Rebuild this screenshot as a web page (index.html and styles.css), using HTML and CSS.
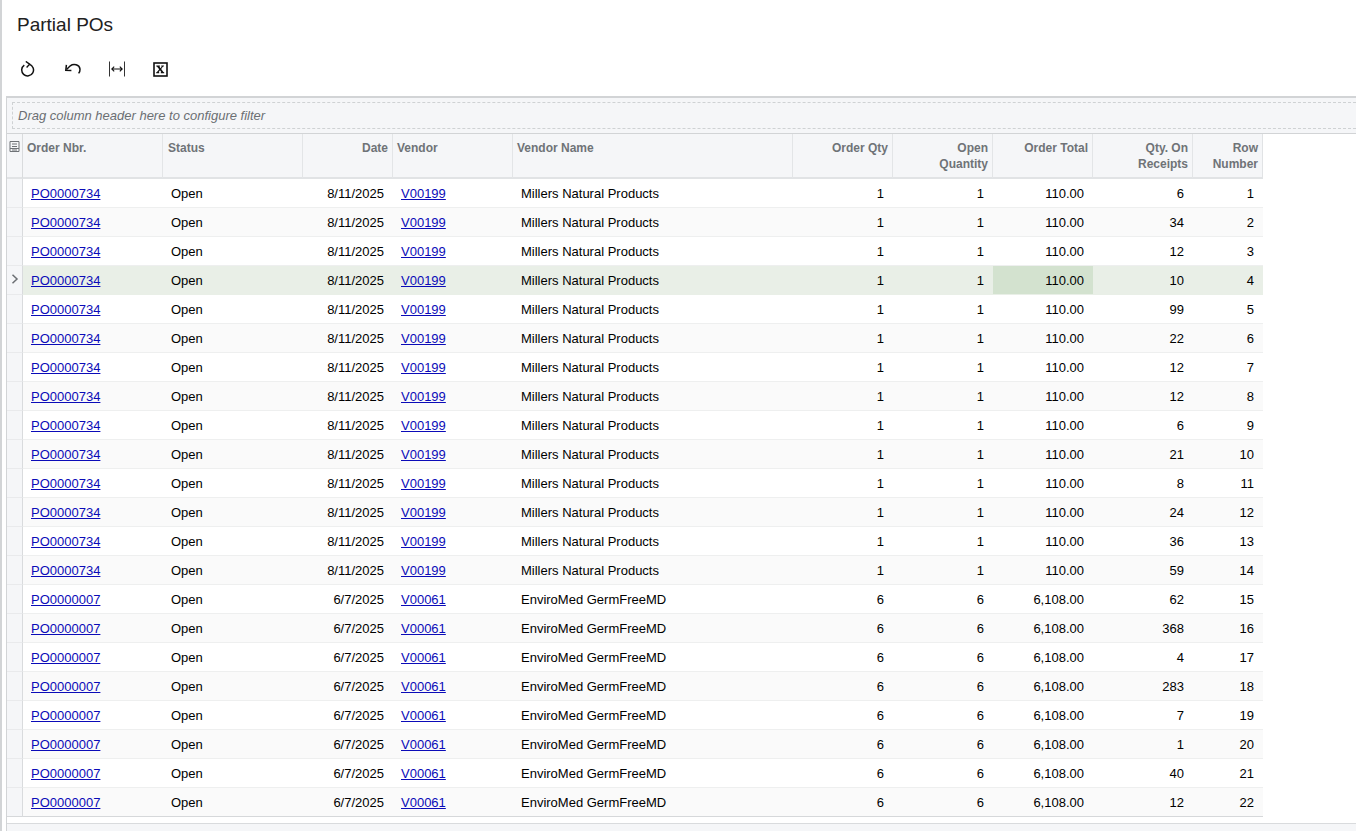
FILE: index.html
```html
<!DOCTYPE html>
<html lang="en">
<head>
<meta charset="utf-8">
<title>Partial POs</title>
<link rel="stylesheet" href="styles.css">
</head>
<body>
<div class="page">
  <h1 class="title">Partial POs</h1>
  <div class="toolbar">
    <button class="tool" aria-label="Refresh"><svg width="16" height="16" viewBox="0 0 16 16" fill="none" stroke="#111" stroke-width="1.5"><path d="M4.300 4.100A5.900 5.900 0 1 0 9.200 3.300"/><path d="M5.800 .4 9.600 3.200 6.600 6.400" stroke-width="1.400"/></svg></button>
    <button class="tool" aria-label="Undo"><svg width="17" height="16" viewBox="0 0 17 16" fill="none" stroke="#111" stroke-width="1.500"><path d="M2.500 8.500 6.300 4.800C9.500 2.400 15.500 3.400 16 8.200c.1 1.800-.5 3.100-1.400 4.200"/><path d="M2.400 3.900 1.800 9.300 7.400 9.500"/></svg></button>
    <button class="tool" aria-label="Fit columns"><svg width="18" height="16" viewBox="0 0 18 16" fill="none" stroke="#111"><path d="M1.500 .5v15M16.500 .5v15" stroke="#333"/><path d="M4 8h10M6.200 5.600 3.800 8l2.400 2.400M11.800 5.600 14.200 8l-2.400 2.400" stroke-width="1.100"/></svg></button>
    <button class="tool" aria-label="Export to Excel"><svg width="15" height="15" viewBox="0 0 15 15"><rect x="1" y="1" width="13" height="13" fill="#fff" stroke="#111" stroke-width="1.600"/><path d="M3.300 3.400h3.600v1l-.5.200 1.200 1.700 1.200-1.700-.5-.2v-1h2.600v1l-.8.200-1.900 2.500 2.200 2.900.8.200v1.100H7.800v-1.100l.5-.2-1.300-1.800-1.300 1.800.5.200v1.100H3.200v-1.100l.8-.2 2.200-2.800L4.100 4.700l-.8-.3z" fill="#111"/></svg></button>
  </div>
  <section class="grid">
    <div class="filter-bar"><div class="filter-drop">Drag column header here to configure filter</div></div>
    <table class="data">
      <colgroup>
        <col class="c-ind"><col class="c-order"><col class="c-status"><col class="c-date"><col class="c-vendor"><col class="c-name"><col class="c-num"><col class="c-num"><col class="c-num"><col class="c-num"><col class="c-row">
      </colgroup>
      <thead>
        <tr>
          <th class="ind"><svg class="cols-icon" width="11" height="13" viewBox="0 0 11 13" fill="none" stroke="#6f7377"><path d="M1 1.500h9v10H1z"/><path d="M3 4h5M3 6.500h5M1 8.500h9" /><path d="M3 10h5"/></svg></th>
          <th>Order Nbr.</th>
          <th class="status-head">Status</th>
          <th class="right">Date</th>
          <th>Vendor</th>
          <th>Vendor Name</th>
          <th class="right">Order Qty</th>
          <th class="right">Open<br>Quantity</th>
          <th class="right">Order Total</th>
          <th class="right">Qty. On<br>Receipts</th>
          <th class="right">Row<br>Number</th>
        </tr>
      </thead>
      <tbody id="rows"></tbody>
    </table>
    <div class="spacer"></div>
    <div class="footer"></div>
  </section>
</div>
<script src="app.js"></script>
</body>
</html>
```

FILE: app.js
```js
var qty = [6, 34, 12, 10, 99, 22, 12, 12, 6, 21, 8, 24, 36, 59, 62, 368, 4, 283, 7, 1, 40, 12];
var html = '';
qty.forEach(function (q, i) {
  var first = i < 14;
  var order = first ? 'PO0000734' : 'PO0000007';
  var date = first ? '8/11/2025' : '6/7/2025';
  var vendor = first ? 'V00199' : 'V00061';
  var name = first ? 'Millers Natural Products' : 'EnviroMed GermFreeMD';
  var n = first ? '1' : '6';
  var total = first ? '110.00' : '6,108.00';
  var sel = i === 3;
  html += '<tr class="' + (sel ? 'selected' : '') + '">' +
    '<td class="ind">' + (sel ? '<svg width="8" height="10" viewBox="0 0 8 10" fill="none" stroke="#6b6f73" stroke-width="1.500"><path d="M1.500 .8 6 5 1.500 9.200"/></svg>' : '') + '</td>' +
    '<td class="link-cell"><a href="#">' + order + '</a></td>' +
    '<td class="text">Open</td>' +
    '<td class="right">' + date + '</td>' +
    '<td class="link-cell"><a href="#">' + vendor + '</a></td>' +
    '<td class="text">' + name + '</td>' +
    '<td class="right">' + n + '</td>' +
    '<td class="right">' + n + '</td>' +
    '<td class="right' + (sel ? ' active' : '') + '">' + total + '</td>' +
    '<td class="right">' + q + '</td>' +
    '<td class="right">' + (i + 1) + '</td>' +
    '</tr>';
});
document.getElementById('rows').innerHTML = html;
```

FILE: styles.css
```css
* { box-sizing: border-box; }
html, body { margin: 0; height: 100%; }
body {
  overflow: hidden;
  background: #fff;
  color: #000;
  font-family: "Liberation Sans", Arial, sans-serif;
  font-size: 13px;
}
.page {
  height: 831px;
  border-left: 2px solid #d2d4d6;
  overflow: hidden;
}
.title {
  margin: 0;
  padding: 13px 0 0 15px;
  height: 52px;
  font-size: 19px;
  line-height: 24px;
  font-weight: 400;
  color: #212121;
}
.toolbar {
  display: flex;
  align-items: center;
  height: 34px;
  padding-left: 18px;
}
.tool {
  width: 44px;
  height: 34px;
  padding: 0;
  border: 0;
  background: none;
  display: flex;
  align-items: center;
  justify-content: flex-start;
}
.tool:nth-child(4) { padding-left: 1px; }
.grid {
  margin: 10px 0 0 4px;
  border-left: 1px solid #d2d4d6;
  border-top: 2px solid #d2d4d6;
}
.filter-bar {
  height: 36px;
  padding: 4px 0 4px 5px;
  background: #f5f6f8;
  border-bottom: 1px solid #d2d4d6;
}
.filter-drop {
  height: 27px;
  border: 1px dashed #cfd2d4;
  border-right: 0;
  padding-left: 5px;
  font-style: italic;
  font-size: 13px;
  line-height: 25px;
  color: #6b6f73;
}
.data {
  border-collapse: separate;
  border-spacing: 0;
  table-layout: fixed;
  width: 1256px;
}
.c-ind { width: 16px; }
.c-order { width: 140px; }
.c-status { width: 140px; }
.c-date { width: 90px; }
.c-vendor { width: 120px; }
.c-name { width: 280px; }
.c-num { width: 100px; }
.c-row { width: 70px; }
th {
  height: 45px;
  padding: 6px 4px 0;
  vertical-align: top;
  text-align: left;
  font-size: 12px;
  line-height: 16px;
  font-weight: 700;
  color: #6f7377;
  background: #f5f6f8;
  border-right: 1px solid #e3e5e7;
  border-bottom: 2px solid #e1e3e5;
}
th.right { text-align: right; }
th.status-head { padding-left: 5px; }
th:last-child { border-right: 1px solid #e1e3e5; }
th.ind { padding: 6px 0 0 2px; border-right: 1px solid #d9dbdd; }
.cols-icon { display: block; }
td {
  height: 29px;
  padding: 2px 8px 0;
  white-space: nowrap;
  border-bottom: 1px solid #eeefef;
  line-height: 16px;
}
td.right { text-align: right; padding-right: 9px; }
td a { color: #0b0bb8; text-decoration: underline; }
td.ind {
  padding: 0 0 0 4px;
  background: #f5f6f8;
  border-right: 1px solid #d9dbdd;
  border-bottom: 1px solid #e9eaec;
}
td.ind svg { display: block; margin-top: -3px; }
tbody tr:nth-child(even) td { background: #fafafa; }
tbody tr:nth-child(even) td.ind { background: #f5f6f8; }
tbody tr.selected td { background: #e9efe7; border-bottom-color: #e9efe7; }
tbody tr.selected td.ind { background: #f5f6f8; border-bottom-color: #e9eaec; }
tbody tr.selected td.active { background: #d3e2cf; }
tbody tr:last-child td { border-bottom: 1px solid #d6d8da; }
.spacer { height: 6px; }
.footer {
  height: 10px;
  background: #f5f6f8;
  border-top: 1px solid #d9dbdd;
}
```
